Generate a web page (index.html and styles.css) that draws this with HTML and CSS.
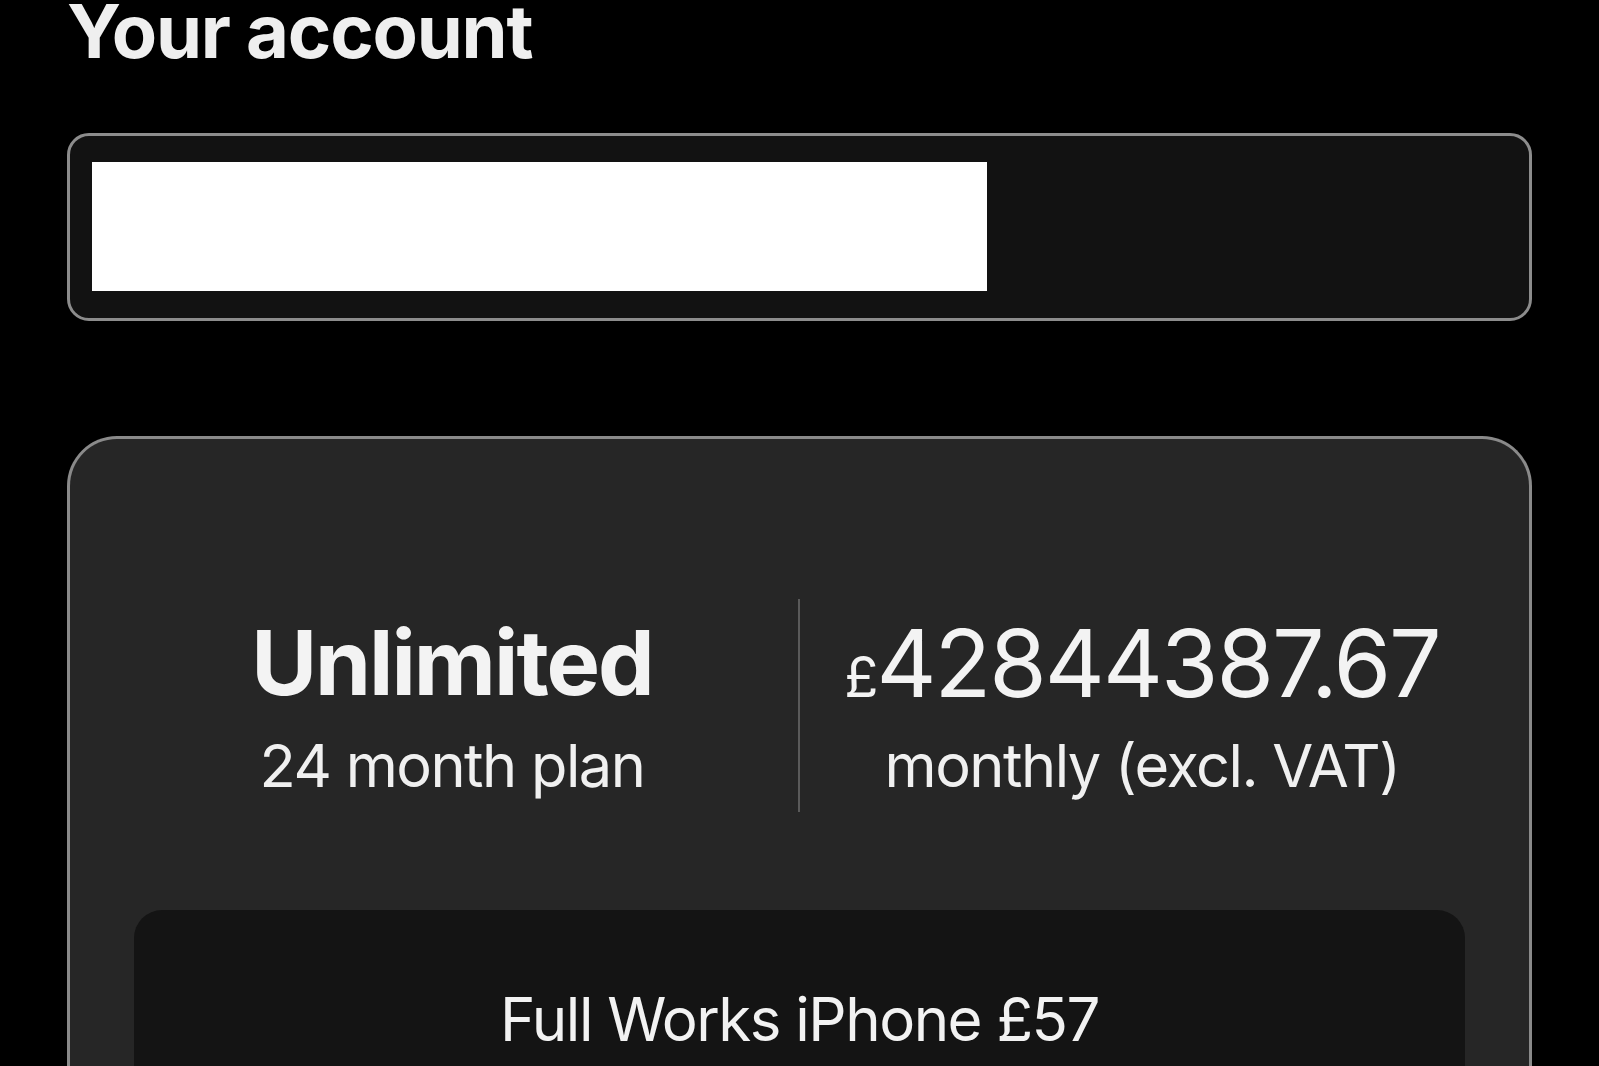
FILE: index.html
```html
<!DOCTYPE html>
<html lang="en">
<head>
<meta charset="utf-8">
<title>Your account</title>
<link rel="stylesheet" href="styles.css">
</head>
<body>
<main class="page">
  <h1 class="title">Your account</h1>
  <div class="account-box">
    <div class="redacted"></div>
  </div>
  <section class="plan-card">
    <div class="plan-summary">
      <div class="plan-col">
        <div class="plan-big plan-name">Unlimited</div>
        <div class="plan-sub">24 month plan</div>
      </div>
      <div class="plan-divider"></div>
      <div class="plan-col">
        <div class="plan-big plan-price"><span class="currency">£</span>42844387.67</div>
        <div class="plan-sub">monthly (excl. VAT)</div>
      </div>
    </div>
    <div class="device-box">
      <div class="device-name">Full Works iPhone £57</div>
    </div>
  </section>
</main>
</body>
</html>
```
FILE: styles.css
```css
html, body {
  margin: 0;
  padding: 0;
  background: #000;
  height: 100%;
  overflow: hidden;
}
body {
  font-family: "Inter", "Liberation Sans", sans-serif;
  color: #f2f2f2;
}
.page {
  padding: 0 67px;
}
.title {
  margin: -6px 0 0 0;
  font-size: 74px;
  line-height: 74px;
  font-weight: 700;
  letter-spacing: -1.2px;
  color: #efefef;
}
.account-box {
  margin-top: 65px;
  height: 188px;
  border: 3px solid #8c8c8c;
  border-radius: 22px;
  background: #121212;
  padding: 26px 22px;
  box-sizing: border-box;
}
.redacted {
  width: 895px;
  height: 129px;
  background: #fff;
}
.plan-card {
  margin-top: 115px;
  border: 3px solid #8a8a8a;
  border-bottom: none;
  border-radius: 50px 50px 0 0;
  background: #262626;
  padding: 160px 64px 0;
  height: 700px;
  box-sizing: border-box;
}
.plan-summary {
  display: grid;
  grid-template-columns: 1fr 3px 1fr;
  align-items: stretch;
}
.plan-col {
  display: flex;
  flex-direction: column;
  align-items: center;
  padding: 14px 0 11px;
}
.plan-col:first-child {
  padding-right: 28px;
}
.plan-col:last-child {
  padding-left: 18px;
}
.plan-divider {
  background: #5a5a5a;
  width: 2px;
}
.plan-big {
  line-height: 100px;
  color: #f3f3f3;
}
.plan-name {
  font-size: 90px;
  font-weight: 700;
  letter-spacing: -2px;
}
.plan-price {
  font-size: 93px;
  font-weight: 400;
  letter-spacing: -2px;
}
.currency {
  font-size: 56px;
  line-height: 1;
}
.plan-sub {
  margin-top: 16px;
  font-size: 59.5px;
  line-height: 72px;
  font-weight: 400;
  letter-spacing: -1.5px;
  color: #f0f0f0;
}
.device-box {
  margin-top: 98px;
  background: #141414;
  border-radius: 28px;
  height: 300px;
  display: flex;
  justify-content: center;
  padding-top: 69px;
  box-sizing: border-box;
}
.device-name {
  font-size: 60px;
  line-height: 80px;
  letter-spacing: -1.5px;
  color: #f2f2f2;
}
```
